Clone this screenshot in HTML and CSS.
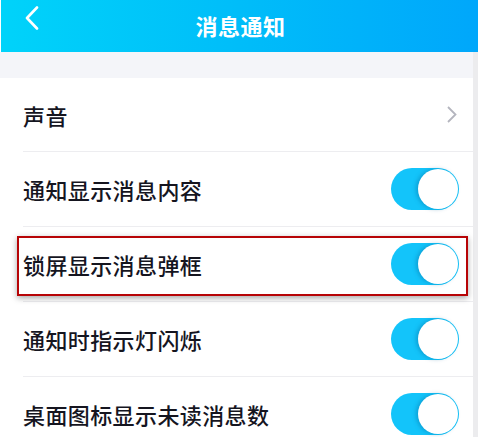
FILE: index.html
```html
<!DOCTYPE html>
<html lang="zh">
<head>
<meta charset="utf-8">
<link rel="stylesheet" href="styles.css">
</head>
<body>
<header class="topbar">
  <span class="back">
    <svg width="14" height="24" viewBox="0 0 14 24"><polyline points="12,1.5 2,12 12,22.5" fill="none" stroke="#fff" stroke-width="2.6" stroke-linecap="round" stroke-linejoin="round"/></svg>
  </span>
  <h1 class="title">消息通知</h1>
</header>
<div class="page">
  <main class="content">
    <div class="band"></div>
    <ul class="list">
      <li class="row">
        <span class="label">声音</span>
        <svg class="chev" width="12" height="17" viewBox="0 0 12 17"><polyline points="2,1 9.5,8.5 2,16" fill="none" stroke="#b4b5be" stroke-width="1.8"/></svg>
      </li>
      <li class="row">
        <span class="label">通知显示消息内容</span>
        <span class="switch"><span class="knob"></span></span>
      </li>
      <li class="row highlighted">
        <span class="label">锁屏显示消息弹框</span>
        <span class="switch"><span class="knob"></span></span>
        <span class="marker"></span>
      </li>
      <li class="row">
        <span class="label">通知时指示灯闪烁</span>
        <span class="switch"><span class="knob"></span></span>
      </li>
      <li class="row">
        <span class="label">桌面图标显示未读消息数</span>
        <span class="switch"><span class="knob"></span></span>
      </li>
    </ul>
  </main>
  <div class="rail"></div>
</div>
</body>
</html>
```

FILE: styles.css
```css
* { box-sizing: border-box; }
html, body { margin: 0; padding: 0; }
body {
  width: 478px;
  height: 437px;
  overflow: hidden;
  background: #fff;
  font-family: "Noto Sans CJK SC", "Noto Sans", sans-serif;
}
.topbar {
  height: 52px;
  margin-left: 1px;
  background: linear-gradient(90deg, #00d3fa 0%, #00bdf9 50%, #00a7fb 100%);
  display: flex;
  align-items: center;
  justify-content: center;
  position: relative;
}
.back {
  position: absolute;
  left: 24px;
  top: 6px;
  display: flex;
}
.title {
  margin: 0 0 2px 2px;
  color: #fff;
  font-size: 22px;
  font-weight: 700;
  letter-spacing: 0.5px;
  line-height: 1;
}
.page {
  display: flex;
  height: 385px;
}
.content {
  flex: 1;
}
.rail {
  width: 5px;
  background: #ececee;
}
.band {
  height: 26px;
  background: #f4f5f9;
}
.list {
  list-style: none;
  margin: 0;
  padding: 0 0 0 23px;
}
.row {
  position: relative;
  height: 75px;
  border-bottom: 1px solid #ededf0;
  display: flex;
  align-items: center;
  justify-content: space-between;
  padding-right: 14px;
}
.row:first-child { height: 74px; }
.label {
  font-size: 22px;
  font-weight: 500;
  color: #15151f;
  letter-spacing: 0.4px;
}
.chev { margin-right: 1px; }
.switch {
  width: 68px;
  height: 42px;
  border-radius: 21px;
  background: #13c4fa;
  display: flex;
  justify-content: flex-end;
  align-items: center;
  padding-right: 1px;
}
.knob {
  width: 40px;
  height: 40px;
  border-radius: 50%;
  background: #fff;
  box-shadow: -2px 0 4px rgba(0, 90, 140, 0.35);
}
.marker {
  position: absolute;
  left: -6px;
  top: 9px;
  width: 451px;
  height: 60px;
  border: 2px solid #b70406;
  box-shadow: 0 2px 6px rgba(0, 0, 0, 0.35);
  pointer-events: none;
}
```
